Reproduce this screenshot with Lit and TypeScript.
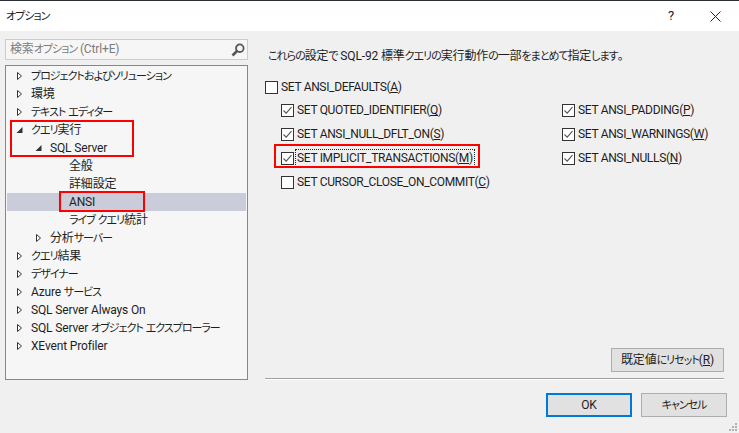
import { LitElement, html, css, svg } from "lit";
import { customElement } from "lit/decorators.js";

type Row = { t: string; lv: number; exp?: "o" | "c"; sel?: boolean };
const rows: Row[] = [
  { t: "プロジェクトおよびソリューション", lv: 0, exp: "c" },
  { t: "環境", lv: 0, exp: "c" },
  { t: "テキスト エディター", lv: 0, exp: "c" },
  { t: "クエリ実行", lv: 0, exp: "o" },
  { t: "SQL Server", lv: 1, exp: "o" },
  { t: "全般", lv: 2 },
  { t: "詳細設定", lv: 2 },
  { t: "ANSI", lv: 2, sel: true },
  { t: "ライブ クエリ統計", lv: 2 },
  { t: "分析サーバー", lv: 1, exp: "c" },
  { t: "クエリ結果", lv: 0, exp: "c" },
  { t: "デザイナー", lv: 0, exp: "c" },
  { t: "Azure サービス", lv: 0, exp: "c" },
  { t: "SQL Server Always On", lv: 0, exp: "c" },
  { t: "SQL Server オブジェクト エクスプローラー", lv: 0, exp: "c" },
  { t: "XEvent Profiler", lv: 0, exp: "c" },
];

/* Kana runs are set smaller and tighter than kanji and Latin, as in the reference's UI font. */
const jp = (s: string) =>
  s.split(/([ぁ-ヿ]+)/).map((p, i) => (i % 2 ? html`<span class="k">${p}</span>` : p));

const arrow = (e?: "o" | "c") =>
  e === "c"
    ? html`<svg class="arrow" width="7" height="10" viewBox="0 0 7 10"><path d="M1.5 1.5 L5.5 5 L1.5 8.5 Z" fill="#fff" stroke="#333" stroke-width="1"/></svg>`
    : e === "o"
    ? html`<svg class="arrow" width="7" height="10" viewBox="0 0 7 10"><path d="M6.5 2 V8 H0.5 Z" fill="#333"/></svg>`
    : html`<span class="arrow"></span>`;

const check = svg`<path d="M2.5 6.5 L5.2 9.2 L10.5 3.2" fill="none" stroke="#555" stroke-width="1.1"/>`;
const box = (c: boolean) =>
  html`<svg class="cb" width="13" height="13" viewBox="0 0 13 13"><rect x="0.5" y="0.5" width="12" height="12" fill="#fff" stroke="#333"/>${c ? check : ""}</svg>`;

const opt = (pre: string, key: string, c: boolean, focus = false) =>
  html`<div class="opt">${box(c)}<span class="lbl ${focus ? "focus" : ""}">${pre}(<u>${key}</u>)</span></div>`;

@customElement("app-root")
export class AppRoot extends LitElement {
  static styles = css`
    :host {
      display: flex;
      flex-direction: column;
      width: 739px;
      height: 433px;
      position: relative;
      overflow: hidden;
      background: #f0f0f0;
      color: #1e1e1e;
      font: 12px/18px Roboto, "Noto Sans CJK JP", sans-serif;
      font-feature-settings: "palt";
      letter-spacing: -0.15px;
    }
    .k { font-size: 11px; letter-spacing: -1px; }
    .top { height: 1px; background: #2b2f36; flex: none; }
    .title {
      height: 30px;
      flex: none;
      background: #fff;
      display: flex;
      align-items: center;
      padding-left: 6px;
      color: #222;
    }
    .title .name { flex: 1; }
    .help { width: 14px; font-size: 13px; margin-right: 32px; text-align: center; }
    .close { margin-right: 18px; display: block; }
    .body { flex: 1; display: flex; padding: 8px 12px 0 5px; min-height: 0; }
    .left { width: 243px; flex: none; display: flex; flex-direction: column; gap: 5px; }
    .search {
      height: 21px;
      box-sizing: border-box;
      border: 1px solid #c9cbd9;
      background: #f6f6f6;
      color: #7c7c7c;
      display: flex;
      align-items: center;
      padding: 0 2px 0 4px;
    }
    .search span { flex: 1; }
    .tree {
      height: 315px;
      box-sizing: border-box;
      border: 1px solid #828790;
      background: #f6f6f6;
      padding: 1px;
    }
    .row { height: 18px; display: flex; align-items: center; white-space: nowrap; }
    .row.sel { background: #cacdd9; }
    .arrow { width: 7px; height: 10px; flex: none; margin-right: 8px; display: block; }
    .l0 { padding-left: 9px; }
    .l1 { padding-left: 28px; }
    .l2 .arrow { display: none; }
    .l2 { padding-left: 62px; }
    .right { flex: 1; display: flex; flex-direction: column; margin-left: 17px; min-width: 0; }
    .desc { margin: 8px 0 0 3px; height: 18px; }
    .top-opt { margin-top: 10px; }
    .opts {
      display: grid;
      grid-template-columns: 281px auto;
      grid-auto-rows: 24px;
      margin: -1px 0 0 16px;
    }
    .opt { display: flex; align-items: center; gap: 2px; height: 24px; white-space: nowrap; }
    .cb { flex: none; display: block; }
    .lbl { padding: 0 1px; letter-spacing: -0.33px; }
    .focus { outline: 1px dotted #222; outline-offset: 0; line-height: 16px; }
    .reset-row { margin-top: 154px; display: flex; justify-content: flex-end; }
    button {
      font: inherit;
      font-feature-settings: inherit;
      letter-spacing: inherit;
      color: #1e1e1e;
      background: #e1e1e1;
      border: 1px solid #adadad;
      height: 24px;
      padding: 0;
      box-sizing: border-box;
    }
    .reset { width: 113px; margin-right: 3px; }
    hr { border: 0; height: 1px; background: #a0a0a0; border-bottom: 1px solid #fff; margin: 6px 3px 0 0; }
    .foot { display: flex; justify-content: flex-end; gap: 9px; margin-top: 13px; }
    .foot button { width: 86px; }
    .ok { border: 2px solid #0078d7; }
    .grip { position: absolute; right: 1px; bottom: 1px; display: block; }
    .red { position: absolute; border: 2px solid #f00; box-sizing: border-box; pointer-events: none; }
    .r1 { left: 10px; top: 120px; width: 124px; height: 37px; }
    .r2 { left: 59px; top: 191px; width: 86px; height: 21px; }
    .r3 { left: 274px; top: 144px; width: 206px; height: 24px; }
  `;

  render() {
    return html`
      <div class="top"></div>
      <div class="title">
        <span class="name">${jp("オプション")}</span>
        <span class="help">?</span>
        <svg class="close" width="11" height="11" viewBox="0 0 11 11"><path d="M0.5 0.5 L10.5 10.5 M10.5 0.5 L0.5 10.5" stroke="#222" fill="none"/></svg>
      </div>
      <div class="body">
        <div class="left">
          <div class="search">
            <span>${jp("検索オプション (Ctrl+E)")}</span>
            <svg width="14" height="14" viewBox="0 0 14 14"><circle cx="8.8" cy="5.2" r="3.8" fill="none" stroke="#555" stroke-width="1.8"/><path d="M6 8 L1.5 12.5" stroke="#555" stroke-width="2.6"/></svg>
          </div>
          <div class="tree">
            ${rows.map(
              (r) => html`<div class="row l${r.lv} ${r.sel ? "sel" : ""}">${arrow(r.exp)}<span>${jp(r.t)}</span></div>`
            )}
          </div>
        </div>
        <div class="right">
          <div class="desc">${jp("これらの設定で SQL-92 標準クエリの実行動作の一部をまとめて指定します。")}</div>
          <div class="top-opt">${opt("SET ANSI_DEFAULTS", "A", false)}</div>
          <div class="opts">
            ${opt("SET QUOTED_IDENTIFIER", "Q", true)}
            ${opt("SET ANSI_PADDING", "P", true)}
            ${opt("SET ANSI_NULL_DFLT_ON", "S", true)}
            ${opt("SET ANSI_WARNINGS", "W", true)}
            ${opt("SET IMPLICIT_TRANSACTIONS", "M", true, true)}
            ${opt("SET ANSI_NULLS", "N", true)}
            ${opt("SET CURSOR_CLOSE_ON_COMMIT", "C", false)}
          </div>
          <div class="reset-row"><button class="reset">${jp("既定値にリセット")}(<u>R</u>)</button></div>
          <hr />
          <div class="foot">
            <button class="ok">OK</button>
            <button>${jp("キャンセル")}</button>
          </div>
        </div>
      </div>
      <svg class="grip" width="10" height="10" viewBox="0 0 10 10" fill="#b0b0b0"><rect x="7" y="1" width="2" height="2"/><rect x="4" y="4" width="2" height="2"/><rect x="7" y="4" width="2" height="2"/><rect x="1" y="7" width="2" height="2"/><rect x="4" y="7" width="2" height="2"/><rect x="7" y="7" width="2" height="2"/></svg>
      <div class="red r1"></div>
      <div class="red r2"></div>
      <div class="red r3"></div>
    `;
  }
}
